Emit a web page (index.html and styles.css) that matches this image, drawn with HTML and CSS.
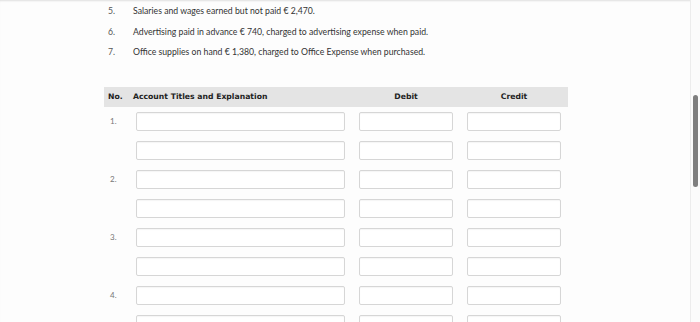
FILE: index.html
```html
<!DOCTYPE html>
<html lang="en">
<head>
    <meta charset="UTF-8">
    <meta name="viewport" content="width=device-width, initial-scale=1.0">
    <title>Adjusting Entries</title>
    <link rel="stylesheet" href="styles.css">
</head>
<body>
    <main class="page">
        <ol class="items" start="5">
            <li><span class="num">5.</span><span>Salaries and wages earned but not paid &euro; 2,470.</span></li>
            <li><span class="num">6.</span><span>Advertising paid in advance &euro; 740, charged to advertising expense when paid.</span></li>
            <li><span class="num">7.</span><span>Office supplies on hand &euro; 1,380, charged to Office Expense when purchased.</span></li>
        </ol>

        <div class="journal">
            <div class="row head">
                <div class="h-no">No.</div>
                <div class="h-acct">Account Titles and Explanation</div>
                <div class="h-amt">Debit</div>
                <div class="h-amt">Credit</div>
            </div>
            <!-- two lines per entry -->
            <div class="row">
                <div class="c-no">1.</div>
                <div class="c-acct"><input type="text"></div>
                <div class="c-amt"><input type="text"></div>
                <div class="c-amt"><input type="text"></div>
            </div>
            <div class="row">
                <div class="c-no"></div>
                <div class="c-acct"><input type="text"></div>
                <div class="c-amt"><input type="text"></div>
                <div class="c-amt"><input type="text"></div>
            </div>
            <div class="row">
                <div class="c-no">2.</div>
                <div class="c-acct"><input type="text"></div>
                <div class="c-amt"><input type="text"></div>
                <div class="c-amt"><input type="text"></div>
            </div>
            <div class="row">
                <div class="c-no"></div>
                <div class="c-acct"><input type="text"></div>
                <div class="c-amt"><input type="text"></div>
                <div class="c-amt"><input type="text"></div>
            </div>
            <div class="row">
                <div class="c-no">3.</div>
                <div class="c-acct"><input type="text"></div>
                <div class="c-amt"><input type="text"></div>
                <div class="c-amt"><input type="text"></div>
            </div>
            <div class="row">
                <div class="c-no"></div>
                <div class="c-acct"><input type="text"></div>
                <div class="c-amt"><input type="text"></div>
                <div class="c-amt"><input type="text"></div>
            </div>
            <div class="row">
                <div class="c-no">4.</div>
                <div class="c-acct"><input type="text"></div>
                <div class="c-amt"><input type="text"></div>
                <div class="c-amt"><input type="text"></div>
            </div>
            <div class="row">
                <div class="c-no"></div>
                <div class="c-acct"><input type="text"></div>
                <div class="c-amt"><input type="text"></div>
                <div class="c-amt"><input type="text"></div>
            </div>
        </div>
    </main>
    <div class="scroll-track"><div class="scroll-thumb"></div></div>
</body>
</html>
```

FILE: styles.css
```css
html, body {
    height: 100%;
    overflow: hidden;
}
body {
    font-family: Lato, "Open Sans", sans-serif;
    background-color: #fdfdfd;
    color: #333;
    margin: 0;
    padding: 0;
}
.page {
    box-shadow: inset 0 2px 2px -1px rgba(0, 0, 0, 0.12);
    padding-top: 1px;
    min-height: 100%;
}
.items {
    list-style: none;
    margin: 0;
    padding: 0 0 0 108px;
    font-size: 8.7px;
}
.items li {
    display: flex;
    line-height: 20.5px;
}
.items .num {
    width: 25px;
    color: #555;
}
.journal {
    margin: 24px 0 0 104px;
    width: 464px;
}
.row {
    display: grid;
    grid-template-columns: 28px 220px 108px 108px;
    height: 29px;
    align-items: center;
}
.row.head {
    height: 20px;
    background-color: #e4e4e4;
    font-family: "DejaVu Sans", Verdana, sans-serif;
    font-weight: bold;
    font-size: 7.7px;
    color: #222;
}
.h-no {
    padding-left: 4px;
}
.h-acct {
    padding-left: 1px;
}
.h-amt {
    text-align: center;
}
.c-no {
    padding-left: 6px;
    font-size: 8px;
    color: #777;
}
.c-acct input {
    margin-left: 4px;
    width: 209px;
}
.c-amt input {
    margin-left: 7px;
    width: 94px;
}
input {
    box-sizing: border-box;
    display: block;
    height: 19px;
    padding: 0 4px;
    border: 1px solid #d6d6d6;
    border-radius: 2px;
    background-color: #fff;
    box-shadow: inset 0 1px 1px rgba(0, 0, 0, 0.04);
}
.scroll-track {
    position: fixed;
    top: 0;
    right: 0;
    width: 9px;
    height: 100%;
    border-left: 1px solid #ececec;
    background-color: #fbfbfb;
}
.scroll-thumb {
    margin: 95px 0 0 2px;
    width: 5px;
    height: 92px;
    border-radius: 3px;
    background-color: #7f7f7f;
}
```
